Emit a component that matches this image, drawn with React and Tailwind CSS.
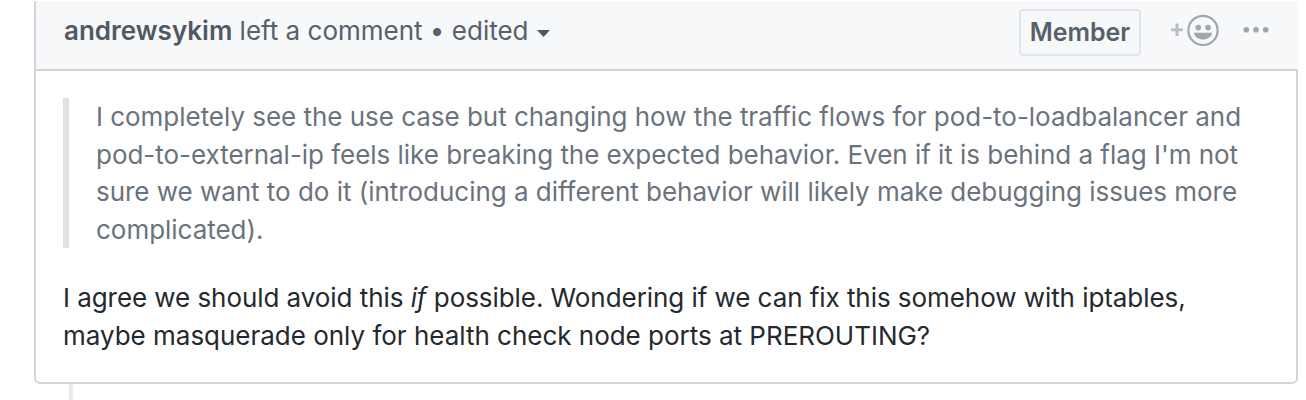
const line = "block w-max whitespace-nowrap";
export default function App() {
  return (
    <div className="h-[400px] w-[1306px] overflow-hidden bg-white pl-[34px] pt-px font-['Inter',sans-serif] text-[26px] leading-[37.5px]">
      <div className="w-[1264px]">
        <header className="flex h-[68px] items-start border-l-2 border-[#d1d5da] bg-[#f6f8fa] pl-[28px] text-[#586069]">
          <div className="flex h-[60px] items-center whitespace-nowrap">
            <span><b className="font-semibold text-[#505962]">andrewsykim</b> left a comment • edited</span>
            <svg className="ml-[8px] mt-[4px] h-[7px] w-[13px]" viewBox="0 0 13 7"><path d="M0 0h13L6.5 7z" fill="#505962" /></svg>
          </div>
          <div className="ml-auto flex items-start">
            <span className="mt-[8px] flex h-[47px] w-[122px] items-center justify-center rounded-[4px] border-2 border-[#e1e4e8] text-[25px] font-semibold tracking-[-0.05px]">Member</span>
            <svg className="h-[60px] w-[157px]" viewBox="1141 1 157 60" fill="none">
              <path d="M1171 29.7h12M1177 23.5v12.5" stroke="#b9bec4" strokeWidth="3" />
              <circle cx="1203" cy="30.4" r="14.6" stroke="#a0a6ac" strokeWidth="2.2" />
              <path d="M1194 32.8h18c-.8 9-17.2 9-18 0z" fill="#a0a6ac" />
              <g fill="#a0a6ac"><circle cx="1198.2" cy="27.6" r="2.8" /><circle cx="1208" cy="27.6" r="2.8" /><circle cx="1246.3" cy="29.8" r="2.8" /><circle cx="1256" cy="29.8" r="2.8" /><circle cx="1265.7" cy="29.8" r="2.8" /></g>
            </svg>
          </div>
        </header>
        <div className="h-[315px] rounded-b-[6px] border-2 border-[#d1d5da] pt-[27px]">
          <blockquote className="ml-[27px] h-[150px] border-l-[6px] border-[#dfe2e5] pl-[27px] tracking-[-0.03px] text-[#6a737d]">
            <span className={line}>I completely see the use case but changing how the traffic flows for pod-to-loadbalancer and</span>
            <span className={line}>pod-to-external-ip feels like breaking the expected behavior. Even if it is behind a flag I'm not</span>
            <span className={line}>sure we want to do it (introducing a different behavior will likely make debugging issues more</span>
            <span className={line}>complicated).</span>
          </blockquote>
          <p className="ml-[27px] mt-[31px] text-[#24292e]">
            <span className={`${line} tracking-[-0.06px]`}>I agree we should avoid this <em>if</em> possible. Wondering if we can fix this somehow with iptables,</span>
            <span className={`${line} tracking-[-0.015px]`}>maybe masquerade only for health check node ports at PREROUTING?</span>
          </p>
        </div>
      </div>
      <div className="ml-[35px] h-[16px] w-[4px] bg-[#e6ebf1]" />
    </div>
  );
}
